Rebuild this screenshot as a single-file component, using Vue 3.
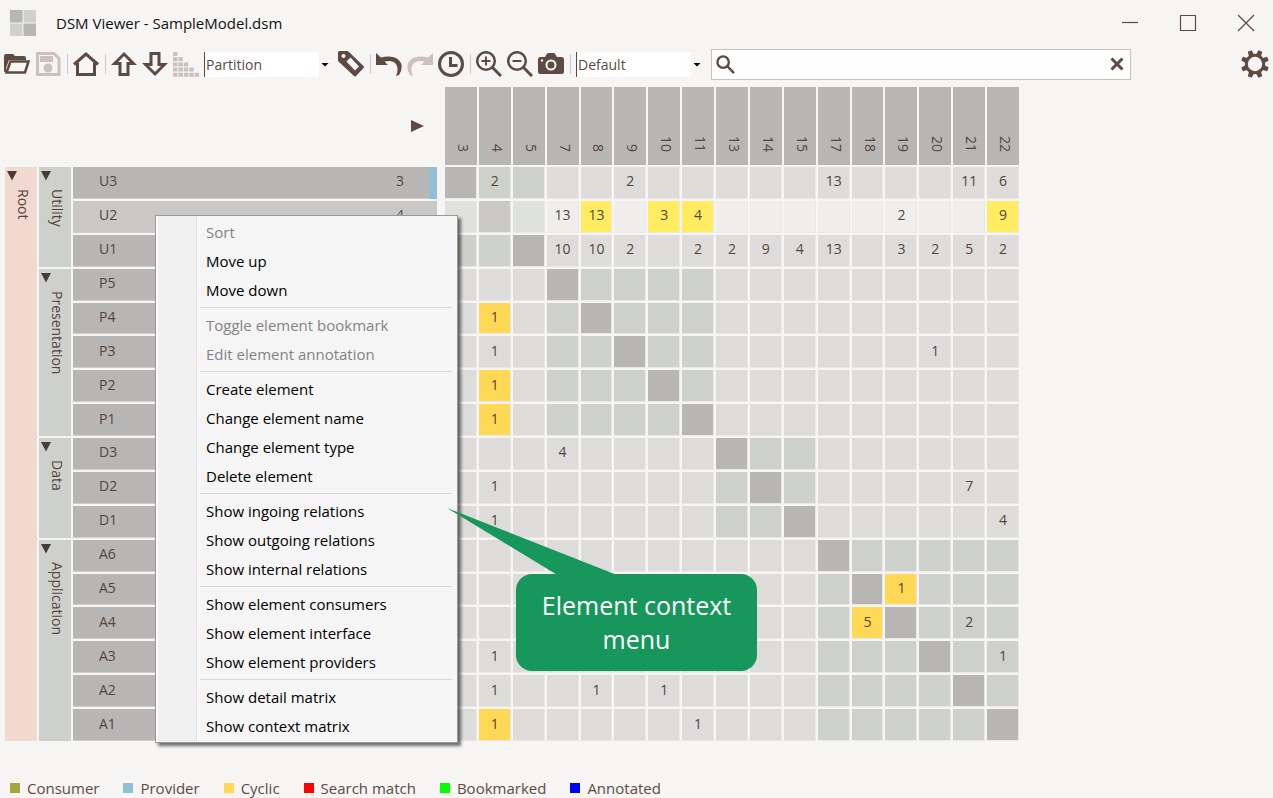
<script setup>
import { ref } from 'vue'

const sortAlgorithm = ref('Partition')
const indicatorView = ref('Default')
const searchText = ref('')

const groups = [
  { name: 'Utility', size: 3 },
  { name: 'Presentation', size: 5 },
  { name: 'Data', size: 3 },
  { name: 'Application', size: 6 },
]

const hoveredId = 4

const elements = [
  { id: 3, name: 'U3', weights: { 4: 2, 9: 2, 17: 13, 21: 11, 22: 6 }, cyclic: [] },
  { id: 4, name: 'U2', weights: { 7: 13, 8: 13, 10: 3, 11: 4, 19: 2, 22: 9 }, cyclic: [8, 10, 11, 22] },
  { id: 5, name: 'U1', weights: { 7: 10, 8: 10, 9: 2, 11: 2, 13: 2, 14: 9, 15: 4, 17: 13, 19: 3, 20: 2, 21: 5, 22: 2 }, cyclic: [] },
  { id: 7, name: 'P5', weights: {}, cyclic: [] },
  { id: 8, name: 'P4', weights: { 4: 1 }, cyclic: [4] },
  { id: 9, name: 'P3', weights: { 4: 1, 20: 1 }, cyclic: [] },
  { id: 10, name: 'P2', weights: { 4: 1 }, cyclic: [4] },
  { id: 11, name: 'P1', weights: { 4: 1 }, cyclic: [4] },
  { id: 13, name: 'D3', weights: { 7: 4 }, cyclic: [] },
  { id: 14, name: 'D2', weights: { 4: 1, 21: 7 }, cyclic: [] },
  { id: 15, name: 'D1', weights: { 4: 1, 22: 4 }, cyclic: [] },
  { id: 17, name: 'A6', weights: {}, cyclic: [] },
  { id: 18, name: 'A5', weights: { 19: 1 }, cyclic: [19] },
  { id: 19, name: 'A4', weights: { 18: 5, 21: 2 }, cyclic: [18] },
  { id: 20, name: 'A3', weights: { 4: 1, 22: 1 }, cyclic: [] },
  { id: 21, name: 'A2', weights: { 4: 1, 8: 1, 10: 1 }, cyclic: [] },
  { id: 22, name: 'A1', weights: { 4: 1, 11: 1 }, cyclic: [4] },
]

let index = 0
for (const group of groups) {
  elements[index].group = group
  for (let i = 0; i < group.size; i++) elements[index + i].groupName = group.name
  index += group.size
}

function cellClass(row, column) {
  return {
    hovered: row.id === hoveredId,
    diagonal: row.id === column.id,
    inner: row.id !== column.id && row.groupName === column.groupName,
    cyclic: row.cyclic.includes(column.id),
  }
}

const menuSections = [
  { items: ['Sort', 'Move up', 'Move down'] },
  { items: ['Toggle element bookmark', 'Edit element annotation'] },
  { items: ['Create element', 'Change element name', 'Change element type', 'Delete element'] },
  { items: ['Show ingoing relations', 'Show outgoing relations', 'Show internal relations'] },
  { items: ['Show element consumers', 'Show element interface', 'Show element providers'] },
  { items: ['Show detail matrix', 'Show context matrix'] },
]
const disabledItems = ['Sort', 'Toggle element bookmark', 'Edit element annotation']

const legend = [
  { label: 'Consumer', kind: 'consumer' },
  { label: 'Provider', kind: 'provider' },
  { label: 'Cyclic', kind: 'cycle' },
  { label: 'Search match', kind: 'match' },
  { label: 'Bookmarked', kind: 'bookmark' },
  { label: 'Annotated', kind: 'annotation' },
]
</script>

<template>
  <div class="window">
    <header class="titlebar">
      <svg class="logo" viewBox="0 0 26 26" aria-hidden="true">
        <path fill="#b7b6b4" d="M0 0h12.500v12.500H0zM13.500 13.500H26V26H13.500z" />
        <path fill="#ced1cb" d="M13.500 0H26v12.500H13.500zM0 13.500h12.500V26H0z" />
      </svg>
      <h1>DSM Viewer - SampleModel.dsm</h1>
      <div class="window-buttons">
        <button type="button" aria-label="Minimize">
          <svg viewBox="0 0 18 18"><path class="thin" d="M1 8.500h16" /></svg>
        </button>
        <button type="button" aria-label="Maximize">
          <svg viewBox="0 0 18 18"><path class="thin" d="M1.500 1.500h15v15h-15z" /></svg>
        </button>
        <button type="button" aria-label="Close">
          <svg viewBox="0 0 18 18"><path class="thin" d="M1 1l16 16M17 1L1 17" /></svg>
        </button>
      </div>
    </header>

    <div class="toolbar">
      <button type="button" aria-label="Open">
        <svg viewBox="0 0 26 26">
          <path class="fill" d="M0 5q0-2 2-2h7l2 2h9q2 0 2 2v2H5L2 17V21H1q-1 0-1-1z" />
          <path class="line" d="M6.500 10.500H24.500L21 21.500H2.500z" />
        </svg>
      </button>
      <button type="button" aria-label="Save" disabled>
        <svg viewBox="0 0 26 26">
          <path class="line bold faint" d="M2.500 2.500H19L24 7.500V23.500H2.500z" />
          <path class="fill faint" d="M5 5h13v6H5z" />
          <circle class="fill faint" cx="13" cy="17" r="4.500" />
        </svg>
      </button>
      <span class="divider"></span>
      <button type="button" aria-label="Home">
        <svg viewBox="0 0 26 26">
          <path class="line bold" d="M1 13.500L13 3L25 13.500M4.500 12V23.500H21.500V12" />
        </svg>
      </button>
      <span class="divider"></span>
      <button type="button" aria-label="Move up">
        <svg viewBox="0 0 26 26">
          <path class="line bold" d="M13 3L22.500 12.500H17V23.500H9V12.500H3.500z" />
        </svg>
      </button>
      <button type="button" aria-label="Move down">
        <svg viewBox="0 0 26 26">
          <path class="line bold" d="M13 23L22.500 13.500H17V2.500H9V13.500H3.500z" />
        </svg>
      </button>
      <button type="button" aria-label="Sort" disabled>
        <svg viewBox="0 0 26 26">
          <path
            class="fill faint"
            d="M0 1h4.500v4H0zM0 6.200h4.500v4H0zM5.400 6.200h4.500v4H5.400zM0 11.400h4.500v4H0zM5.400 11.400h4.500v4H5.400zM10.800 11.400h4.500v4h-4.500zM0 16.600h4.500v4H0zM5.400 16.600h4.500v4H5.400zM10.800 16.600h4.500v4h-4.500zM16.200 16.600h4.500v4h-4.500zM0 21.800h4.500v4H0zM5.400 21.800h4.500v4H5.400zM10.800 21.800h4.500v4h-4.500zM16.200 21.800h4.500v4h-4.500zM21.600 21.800H26v4h-4.400z"
          />
        </svg>
      </button>
      <div class="combo">
        <select v-model="sortAlgorithm" aria-label="Sort algorithm">
          <option>Partition</option>
        </select>
      </div>
      <button type="button" aria-label="Tag">
        <svg viewBox="0 0 26 26">
          <path
            class="fill"
            fill-rule="evenodd"
            d="M0 1.500Q0 0 1.500 0H9q1 0 2 1L25.500 15q1 1 0 2L18 25q-1 1-2 0L1 11Q0 10 0 9zM5.500 3a2 2 0 1 0 .01 0zM12.500 6.500L8.500 10.500L17 19.500L21 15.500z"
          />
        </svg>
      </button>
      <span class="divider"></span>
      <button type="button" aria-label="Undo">
        <svg viewBox="0 0 26 26">
          <path class="fill" d="M0 2L0 14H12L8.500 10.500Q20 8 21.500 17Q22 21 20 25L23 24Q27 18 25 12Q20 3 5 6.500z" />
        </svg>
      </button>
      <button type="button" aria-label="Redo" disabled>
        <svg viewBox="0 0 26 26">
          <path class="fill faint" d="M26 2L26 14H14L17.500 10.500Q6 8 4.500 17Q4 21 6 25L3 24Q-1 18 1 12Q6 3 21 6.500z" />
        </svg>
      </button>
      <button type="button" aria-label="History">
        <svg viewBox="0 0 26 26">
          <circle class="line bold" cx="13" cy="13" r="11.500" />
          <path class="line bold" d="M12.500 6V14.500H19.500" />
        </svg>
      </button>
      <span class="divider"></span>
      <button type="button" aria-label="Zoom in">
        <svg viewBox="0 0 26 26">
          <circle class="line" cx="10" cy="10" r="8.800" />
          <path class="line bold" d="M16.500 16.500L25 25" />
          <path class="line light" d="M5.500 10h9M10 5.500v9" />
        </svg>
      </button>
      <button type="button" aria-label="Zoom out">
        <svg viewBox="0 0 26 26">
          <circle class="line" cx="10" cy="10" r="8.800" />
          <path class="line bold" d="M16.500 16.500L25 25" />
          <path class="line light" d="M5.500 10h9" />
        </svg>
      </button>
      <button type="button" aria-label="Screenshot">
        <svg viewBox="0 0 26 26">
          <path
            class="fill"
            d="M2.500 6H7L8.500 3.500Q9 2 10.500 2h5Q17 2 17.500 3.500L19 6h4.500Q26 6 26 8.500v12q0 2.500-2.500 2.500h-21Q0 23 0 20.500v-12Q0 6 2.500 6z"
          />
          <circle class="lens" cx="13" cy="14" r="4.500" />
          <circle class="dot" cx="4" cy="9.500" r="1.200" />
        </svg>
      </button>
      <span class="divider"></span>
      <div class="combo">
        <select v-model="indicatorView" aria-label="Indicator view">
          <option>Default</option>
        </select>
      </div>
      <div class="search">
        <svg viewBox="0 0 20 20" aria-hidden="true">
          <circle class="line" cx="7.500" cy="7.500" r="6" />
          <path class="line" d="M12 12l7 7" />
        </svg>
        <input v-model="searchText" type="text" aria-label="Search" />
        <button type="button" class="clear" aria-label="Clear search" @click="searchText = ''">
          <svg viewBox="0 0 14 14"><path class="line bold" d="M1.500 1.500l11 11M12.500 1.500l-11 11" /></svg>
        </button>
      </div>
      <button type="button" class="settings" aria-label="Settings">
        <svg viewBox="0 0 28 28">
          <path
            v-for="n in 8"
            :key="n"
            class="fill"
            d="M11.200 5.500L12 0H16L16.800 5.500z"
            :transform="`rotate(${n * 45 - 22.5} 14 14)`"
          />
          <circle class="line bold" cx="14" cy="14" r="8.700" />
        </svg>
      </button>
    </div>

    <main>
      <table class="matrix">
        <thead>
          <tr>
            <td class="corner">
              <button type="button" aria-label="Toggle metrics">
                <svg viewBox="0 0 14 14"><path class="fill" d="M1 1L14 7L1 13z" /></svg>
              </button>
            </td>
            <th v-for="column in elements" :key="column.id" scope="col" class="column-header">
              {{ column.id }}
            </th>
          </tr>
        </thead>
        <tbody>
          <tr v-for="(row, r) in elements" :key="row.id">
            <th v-if="r === 0" class="root" scope="rowgroup" rowspan="17">
              <button type="button" class="fold" aria-label="Collapse Root">
                <svg viewBox="0 0 10 10"><path d="M0 0h10L5 9.500z" /></svg>
              </button>
              <span>Root</span>
            </th>
            <th
              v-if="row.group"
              class="group"
              scope="rowgroup"
              :rowspan="row.group.size"
              :style="{ gridRowEnd: `span ${row.group.size}` }"
            >
              <button type="button" class="fold" :aria-label="`Collapse ${row.groupName}`">
                <svg viewBox="0 0 10 10"><path d="M0 0h10L5 9.500z" /></svg>
              </button>
              <span>{{ row.groupName }}</span>
            </th>
            <th class="element" :class="{ hovered: row.id === hoveredId, provides: r === 0 }" scope="row">
              <span>{{ row.name }}</span>
              <span>{{ row.id }}</span>
            </th>
            <td v-for="column in elements" :key="column.id" class="cell" :class="cellClass(row, column)">
              {{ row.weights[column.id] }}
            </td>
          </tr>
        </tbody>
      </table>
    </main>

    <ul class="legend">
      <li v-for="entry in legend" :key="entry.kind">
        <i :class="entry.kind"></i>{{ entry.label }}
      </li>
    </ul>

    <div class="menu" role="menu">
      <div v-for="(section, s) in menuSections" :key="s" class="section">
        <button
          v-for="item in section.items"
          :key="item"
          type="button"
          role="menuitem"
          :disabled="disabledItems.includes(item)"
        >
          {{ item }}
        </button>
      </div>
    </div>

    <div class="callout">
      <svg viewBox="0 0 170 68" aria-hidden="true"><path d="M0 0L170 67V68H112z" /></svg>
      <p>Element context menu</p>
    </div>
  </div>
</template>

<style>
body {
  background: #f6f5f3;
}
</style>

<style scoped>
.window {
  position: relative;
  display: flex;
  flex-direction: column;
  box-sizing: border-box;
  min-height: 100vh;
  overflow: hidden;
  background: #f6f5f3;
  color: #5d4a43;
  font-family: "Open Sans", "Noto Sans", sans-serif;
  font-size: 14px;
}
button {
  display: block;
  padding: 0;
  border: 0;
  background: none;
  color: inherit;
  font: inherit;
}
svg {
  display: block;
}
.fill {
  fill: #5d4a43;
}
.fill.faint {
  fill: #cbc0be;
}
.line {
  fill: none;
  stroke: #5d4a43;
  stroke-width: 2.5;
}
.line.faint {
  stroke: #cbc0be;
}
.line.bold {
  stroke-width: 3;
}
.line.light {
  stroke-width: 2;
}
.thin {
  fill: none;
  stroke: #5d4a43;
  stroke-width: 1.2;
}

.titlebar {
  display: flex;
  align-items: center;
  height: 46px;
  padding: 0 18px 0 10px;
}
.logo {
  width: 26px;
  height: 26px;
}
.titlebar h1 {
  margin: 0 0 0 20px;
  color: #111;
  font-size: 15px;
  font-weight: 400;
}
.window-buttons {
  display: flex;
  gap: 40px;
  margin-left: auto;
}
.window-buttons svg {
  width: 18px;
  height: 18px;
}

.toolbar {
  display: flex;
  align-items: center;
  gap: 5px;
  height: 36px;
  padding: 0 4px;
}
.toolbar > button svg {
  width: 26px;
  height: 26px;
}
.divider {
  width: 1px;
  height: 20px;
  border-right: 1px solid #c3c9d2;
}
.lens {
  fill: none;
  stroke: #f6f5f3;
  stroke-width: 2;
}
.dot {
  fill: #f6f5f3;
}
.combo {
  position: relative;
  width: 129px;
}
.combo::after {
  content: "";
  position: absolute;
  top: 11px;
  right: 4px;
  width: 8px;
  height: 4px;
  background: #000;
  clip-path: polygon(0 0, 100% 0, 50% 100%);
  pointer-events: none;
}
.combo select {
  display: block;
  appearance: none;
  width: 100%;
  height: 25px;
  padding: 0 16px 0 1px;
  border: 0;
  border-left: 1px solid #5d4a43;
  border-radius: 0;
  background: linear-gradient(#fff, #fff) 0 0 / 114px 100% no-repeat;
  color: #5d4a43;
  font: inherit;
}
.search {
  display: flex;
  flex: 1;
  align-items: center;
  box-sizing: border-box;
  height: 31px;
  margin: 0 105px 0 1px;
  padding: 0 6px 0 4px;
  border: 1px solid #cbc0be;
  background: #fff;
}
.search > svg {
  width: 19px;
  height: 19px;
}
.search input {
  flex: 1;
  min-width: 0;
  border: 0;
  outline: 0;
  background: none;
  color: inherit;
  font: inherit;
}
.clear svg {
  width: 14px;
  height: 14px;
}
.toolbar > .settings svg {
  width: 28px;
  height: 28px;
}

.matrix {
  display: grid;
  grid-template-columns: 32px 32px 364px 4px repeat(17, minmax(0, 1fr));
  grid-template-rows: 78px repeat(17, minmax(0, 1fr));
  gap: 2px;
  width: 1014px;
  height: 654px;
  margin: 5px 0 0 5px;
}
.matrix thead,
.matrix tbody,
.matrix tr {
  display: contents;
}
.matrix th {
  font-weight: 400;
}
.matrix th,
.matrix td {
  padding: 0;
  color: #54443e;
}
.corner {
  display: flex;
  grid-column: 1 / span 4;
  align-items: center;
  justify-content: flex-end;
}
.corner svg {
  width: 14px;
  height: 14px;
  margin-right: 19px;
}
.column-header {
  display: flex;
  align-items: center;
  justify-content: flex-end;
  writing-mode: vertical-rl;
  background: #b7b6b4;
}
.matrix .column-header {
  padding: 0 0 13px 5px;
}
.root,
.group {
  display: flex;
  align-items: flex-start;
  flex-direction: column;
  gap: 8px;
}
.matrix .root,
.matrix .group {
  padding: 4px 0 0 2px;
}
.root {
  grid-row: 2 / span 17;
  grid-column: 1;
  background: #f2d9cf;
}
.group {
  grid-column: 2;
  background: #ced1cb;
}
.root span,
.group span {
  padding-left: 7px;
  writing-mode: vertical-rl;
}
.fold svg {
  width: 10px;
  height: 10px;
  fill: #4a3b35;
}
.element {
  display: flex;
  grid-column: 3 / span 2;
  align-items: center;
  justify-content: space-between;
  margin-right: 6px;
  background: #b7b6b4;
  box-shadow: inset 0 -1px #cfcecc;
}
.matrix .element {
  padding: 0 33px 4px 26px;
}
.element.provides {
  border-right: 8px solid #90c0d8;
}
.matrix .element.provides {
  padding-right: 25px;
}
.element.hovered {
  background: #c9c8c7;
}
.cell {
  display: flex;
  align-items: center;
  justify-content: center;
  background: #dddcdb;
  box-shadow: inset -1px -1px #e9e8e7;
}
.matrix .cell {
  padding-bottom: 4px;
}
.cell.inner {
  background: #ced1cb;
}
.cell.diagonal {
  background: #b7b6b4;
}
.cell.cyclic {
  background: #ffd955;
}
.cell.hovered {
  background: #efeeed;
}
.cell.hovered.inner {
  background: #dfe2dc;
}
.cell.hovered.diagonal {
  background: #c9c8c7;
}
.cell.hovered.cyclic {
  background: #ffec60;
}

.legend {
  display: flex;
  gap: 24px;
  margin: auto 0 0;
  padding: 0 10px;
  list-style: none;
  font-size: 15px;
  line-height: 20px;
}
.legend li {
  display: flex;
  align-items: center;
  gap: 7px;
}
.legend i {
  width: 10px;
  height: 10px;
}
.consumer {
  background: #a5a53c;
}
.provider {
  background: #90c0d8;
}
.cycle {
  background: #ffd955;
}
.match {
  background: #f00;
}
.bookmark {
  background: #0f0;
}
.annotation {
  background: #00f;
}

.menu {
  position: absolute;
  top: 215px;
  left: 155px;
  box-sizing: border-box;
  width: 303px;
  padding: 2px 5px 1px 2px;
  border: 1px solid #999;
  background: linear-gradient(90deg, #fff 2px, #f0f0f0 2px 40px, #e2e2e2 40px 41px, #fff 41px 42px, #f5f5f5 42px);
  box-shadow: 3px 3px 3px rgba(0, 0, 0, 0.55);
}
.section + .section {
  margin-top: 2px;
  margin-left: 42px;
  padding-top: 3px;
  border-top: 1px solid #d7d7d7;
}
.section button {
  width: 100%;
  padding-left: 6px;
  color: #000;
  font-size: 15px;
  line-height: 29px;
  text-align: left;
}
.section:first-child button {
  padding-left: 48px;
}
.section button:disabled {
  color: #838383;
}

.callout {
  position: absolute;
  top: 574px;
  left: 516px;
  box-sizing: border-box;
  width: 241px;
  padding: 14px 20px 15px;
  border-radius: 16px;
  background: #17975c;
  color: #fff;
  font-size: 25px;
  line-height: 34px;
  text-align: center;
}
.callout svg {
  position: absolute;
  top: -66px;
  left: -69px;
  width: 170px;
  height: 68px;
  fill: #17975c;
}
.callout p {
  margin: 0;
}
</style>
